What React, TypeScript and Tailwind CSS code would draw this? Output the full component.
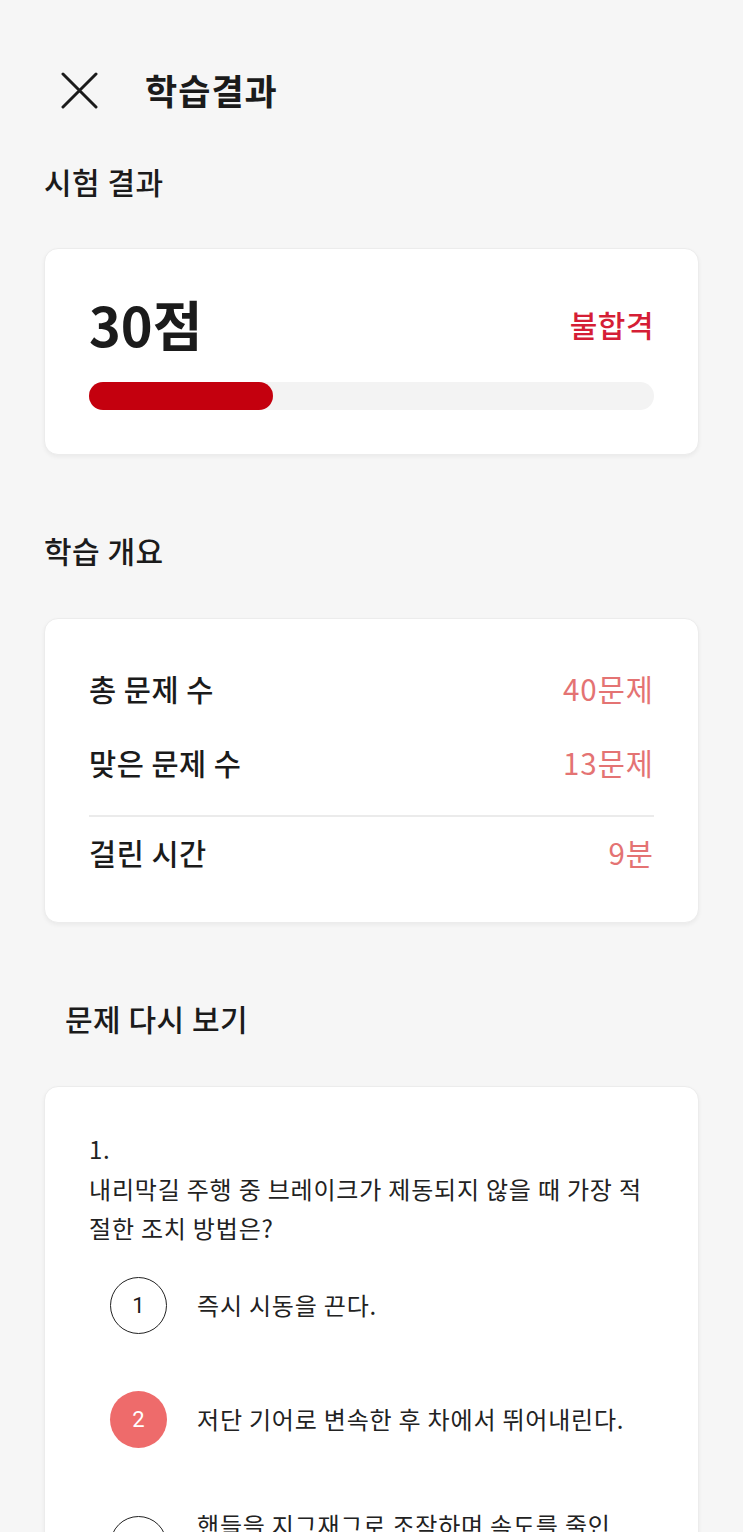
import React from "react";

const OVERVIEW = [
  { label: "총 문제 수", value: "40문제" },
  { label: "맞은 문제 수", value: "13문제" },
];

const OPTIONS = [
  { no: 1, text: "즉시 시동을 끈다.", picked: false },
  { no: 2, text: "저단 기어로 변속한 후 차에서 뛰어내린다.", picked: true },
  { no: 3, text: "핸들을 지그재그로 조작하며 속도를 줄인\n후 안전한 곳에 정차한다.", picked: false },
];

const App: React.FC = () => {
  return (
    <div
      className="w-[743px] h-[1532px] overflow-hidden bg-[#f6f6f6] text-[#1b1b1b]"
      style={{ fontFamily: '"Noto Sans CJK KR", "Noto Sans", sans-serif' }}
    >
      {/* Header */}
      <div className="mt-[70px] h-10 flex items-center pl-[61px]">
        <svg width="37" height="37" viewBox="0 0 37 37" fill="none">
          <path d="M2 2L35 35M35 2L2 35" stroke="#1b1b1b" strokeWidth="3" strokeLinecap="round" />
        </svg>
        <h1 className="ml-[47px] text-[35px] font-bold leading-10 tracking-[1px]">학습결과</h1>
      </div>

      <div className="px-[44px]">
        {/* Score */}
        <h2 className="mt-[51px] text-[30px] font-medium leading-10 tracking-[0.5px]">시험 결과</h2>
        <div className="mt-[47px] bg-white rounded-[14px] border border-[#ececec] shadow-[0_2px_4px_rgba(0,0,0,0.05)] px-[44px] pt-[45px] pb-[44px]">
          <div className="flex items-center justify-between h-[60px]">
            <span className="text-[54px] font-bold leading-[60px]">30점</span>
            <span className="text-[30px] font-medium tracking-[0.5px] text-[#d51e35]">불합격</span>
          </div>
          <div className="mt-[28px] h-[28px] rounded-full bg-[#f3f3f3]">
            <div className="h-full w-[32.5%] rounded-full bg-[#c4000e]" />
          </div>
        </div>

        {/* Overview */}
        <h2 className="mt-[75px] text-[30px] font-medium leading-10 tracking-[0.5px]">학습 개요</h2>
        <div className="mt-[48px] bg-white rounded-[14px] border border-[#ececec] shadow-[0_2px_4px_rgba(0,0,0,0.05)] px-[44px] pt-[49px] pb-[50px]">
          <div className="flex flex-col gap-[34px]">
            {OVERVIEW.map((row) => (
              <div key={row.label} className="flex items-center justify-between h-10">
                <span className="text-[29.5px] font-medium tracking-[0.5px]">{row.label}</span>
                <span className="text-[29.5px] tracking-[1px] text-[#e47373]">{row.value}</span>
              </div>
            ))}
          </div>
          <div className="mt-[33px] h-[2px] bg-[#ebebeb]" />
          <div className="mt-[15px] flex items-center justify-between h-10">
            <span className="text-[29.5px] font-medium tracking-[0.5px]">걸린 시간</span>
            <span className="text-[29.5px] tracking-[1px] text-[#e47373]">9분</span>
          </div>
        </div>

        {/* Review */}
        <h2 className="mt-[75px] pl-[21px] text-[30px] font-medium leading-10 tracking-[0.5px]">문제 다시 보기</h2>
        <div className="mt-[48px] bg-white rounded-[14px] border border-[#ececec] shadow-[0_2px_4px_rgba(0,0,0,0.05)] px-[44px] pt-[42px] pb-10">
          <p className="text-[24px] leading-[39.5px] tracking-[0.8px] text-[#222]">
            1.
            <br />
            내리막길 주행 중 브레이크가 제동되지 않을 때 가장 적
            <br />
            절한 조치 방법은?
          </p>
          <div className="mt-[29px] flex flex-col gap-[57px]">
            {OPTIONS.map((opt) => (
              <div key={opt.no} className="flex items-center pl-[21px]">
                <div
                  className={
                    opt.picked
                      ? "w-[57px] h-[57px] shrink-0 rounded-full bg-[#ee6b6b] text-white flex items-center justify-center text-[22px]"
                      : "w-[57px] h-[57px] shrink-0 rounded-full border-[1.5px] border-[#222] flex items-center justify-center text-[22px]"
                  }
                  style={{ fontFamily: 'Roboto, "Noto Sans", sans-serif' }}
                >
                  {opt.no}
                </div>
                <span className="ml-[30px] text-[24px] leading-10 tracking-[0.8px] text-[#222] whitespace-pre-line">
                  {opt.text}
                </span>
              </div>
            ))}
          </div>
        </div>
      </div>
    </div>
  );
};

export default App;
